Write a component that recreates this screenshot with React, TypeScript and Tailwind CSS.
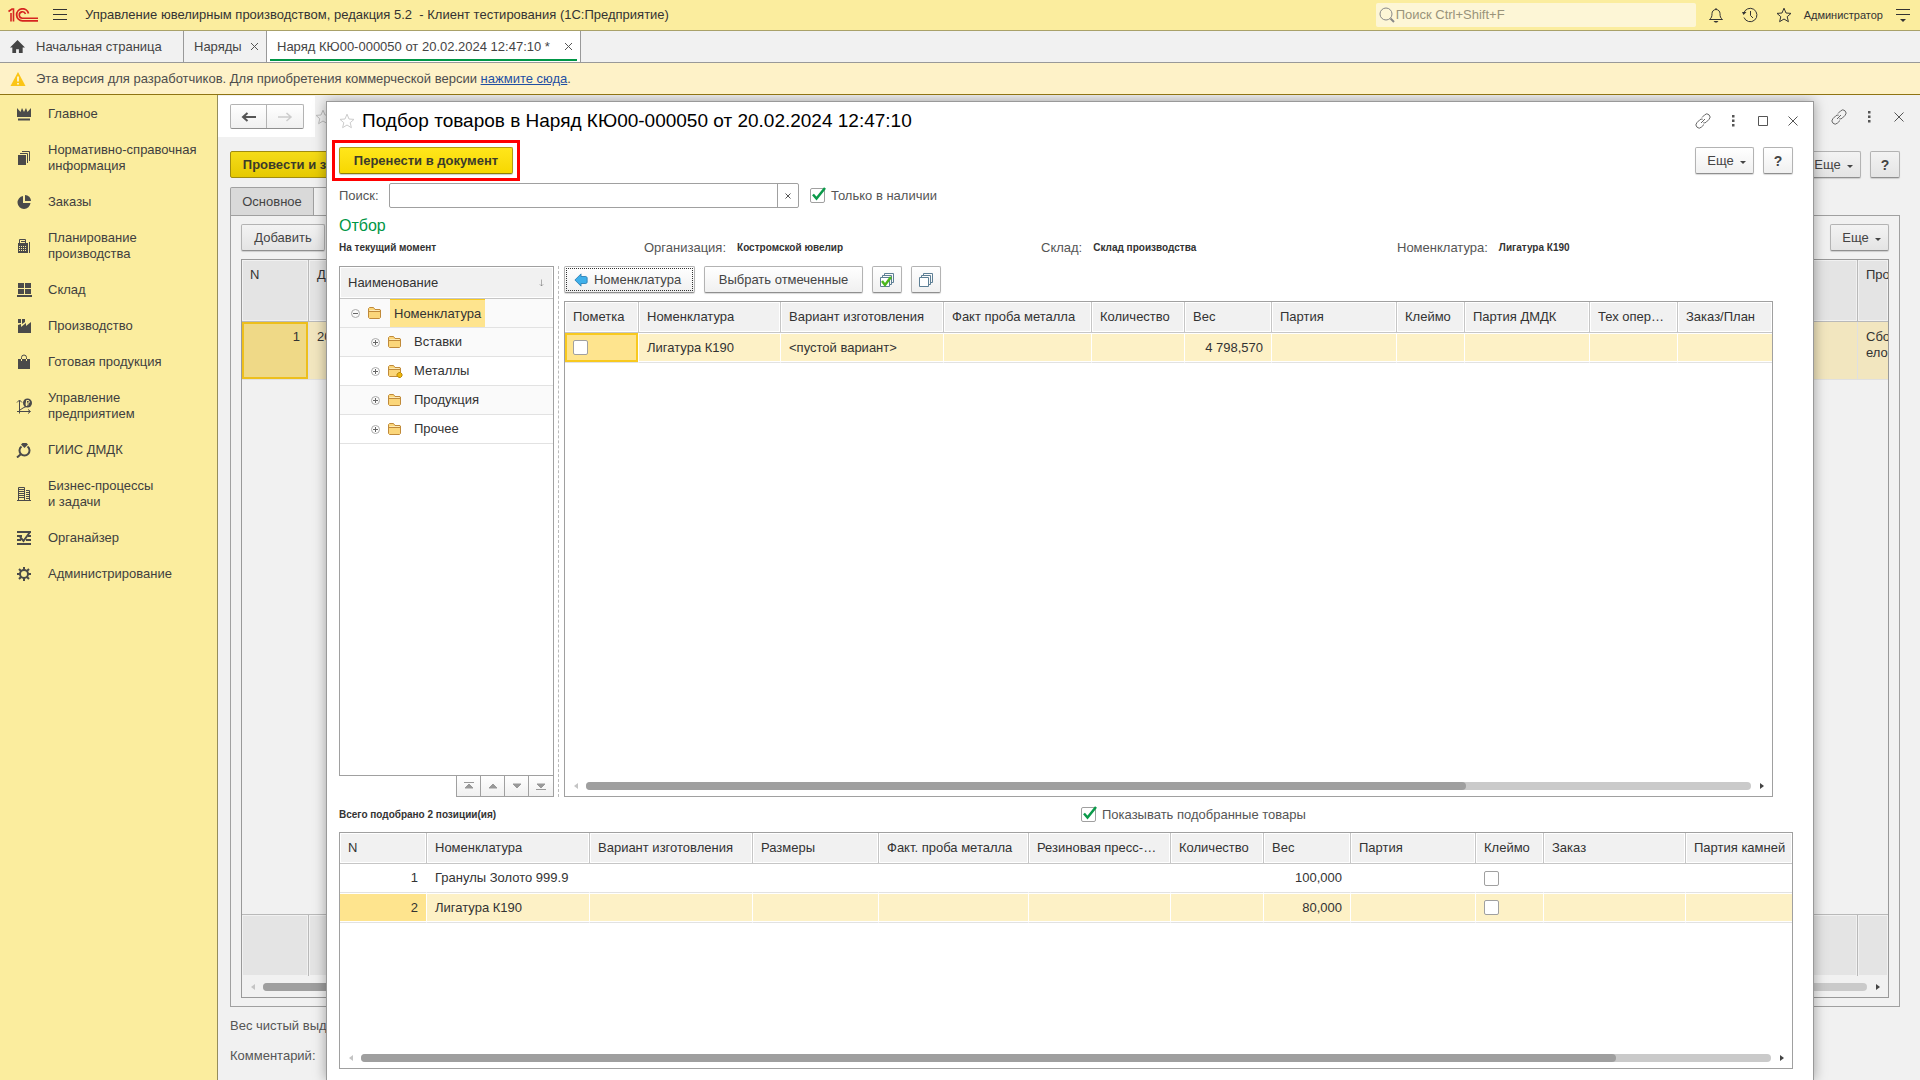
import React from 'react';
import clsx from 'clsx';

type IconProps = { children: React.ReactNode; className?: string; box?: number };

// All stroke icons share a 16x16 grid
const Icon: React.FC<IconProps> = ({ children, className = 'w-4 h-4', box = 16 }) => (
  <svg
    viewBox={`0 0 ${box} ${box}`}
    className={clsx('shrink-0', className)}
    fill="none"
    stroke="currentColor"
    strokeWidth="1"
    aria-hidden="true"
  >
    {children}
  </svg>
);

const LinkIcon = () => (
  <Icon className="w-4 h-4 text-[#666]">
    <path d="M7 4.5 9.6 1.9a3 3 0 0 1 4.5 4.4L11.300 9.100a3 3 0 0 1-3 .7" />
    <path d="M9 11.500 6.400 14.100a3 3 0 0 1-4.500-4.400L4.700 6.900a3 3 0 0 1 3-.7" />
    <path d="m6 10 4-4" />
  </Icon>
);

const DotsIcon = () => (
  <Icon className="w-4 h-4 text-[#555]">
    <g fill="currentColor" stroke="none">
      <path d="M7 2h2.500v2.500H7zM7 6.500h2.500V9H7zM7 11h2.500v2.500H7z" />
    </g>
  </Icon>
);

const CloseIcon = () => (
  <Icon className="w-4 h-4 text-[#555]">
    <path d="m3.500 3.500 9 9M12.500 3.500l-9 9" />
  </Icon>
);

const StarIcon = ({ className }: { className?: string }) => (
  <Icon className={className}>
    <path d="m8 1.200 2 4.800 5 .4-3.800 3.300 1.200 5L8 12l-4.400 2.700 1.200-5L1 6.400 6 6z" />
  </Icon>
);

const FolderIcon = ({ dot }: { dot?: boolean }) => (
  <Icon className="w-4 h-4">
    <path d="M1.500 12.500v-9l1-1h4l1.500 2h5l.5.500v7.500l-1 1h-10z" fill="#fbd67a" stroke="#c08a3a" />
    <path d="M1.500 6.500h12" stroke="#c08a3a" />
    <path d="M2.500 5.500h10" stroke="#fdeab5" />
    {dot && <path d="m10 11 2-1.500h1.500l1.500 1.500v2l-1.500 1.500H12L10 13z" fill="#f0b80c" stroke="#b98a10" />}
  </Icon>
);

type MenuItem = { label: string[]; icon: React.ReactNode };

const MENU: MenuItem[] = [
  {
    label: ['Главное'],
    icon: <path d="M1 2l3.500 4L6 2l2 4 2-4 1.500 4L15 2v9H1zM2 12.500h12v2H2z" fill="currentColor" stroke="none" />,
  },
  {
    label: ['Нормативно-справочная', 'информация'],
    icon: (
      <>
        <path d="M2 5h8v10H2z" fill="currentColor" stroke="none" />
        <path d="M4 3.500h7.500V13M6 1.500h7.500V11" />
      </>
    ),
  },
  {
    label: ['Заказы'],
    icon: (
      <>
        <path d="M7 2a6.500 6.500 0 1 0 7.500 7H7z" fill="currentColor" stroke="none" />
        <path d="M9 1a6 6 0 0 1 6 6H9z" fill="currentColor" stroke="none" />
      </>
    ),
  },
  {
    label: ['Планирование', 'производства'],
    icon: (
      <>
        <path d="M3.500 5.500v-4h6v4M13.500 4v11" />
        <path d="M2 5h10v10H2z" fill="currentColor" stroke="none" />
        <path d="M3 8.500h8M3 10.500h8M3 12.500h8" stroke="#fbed9e" strokeDasharray="1 1" />
        <path d="M5 3.500h4" />
      </>
    ),
  },
  {
    label: ['Склад'],
    icon: <path d="M2 1h6v5H2zM9 1h6v5H9zM2 7h6v5H2zM9 7h6v5H9zM1 13h15v2H1z" fill="currentColor" stroke="none" />,
  },
  {
    label: ['Производство'],
    icon: <path d="M2 1h3v4H2zM6 1h3v3L6 6zM2 7l3-1v3l5-4v3l5-4v11H2z" fill="currentColor" stroke="none" />,
  },
  {
    label: ['Готовая продукция'],
    icon: (
      <>
        <path d="M2 5h12v10H2z" fill="currentColor" stroke="none" />
        <path d="M5.500 5V3.500a2.500 2.500 0 0 1 5 0V5" />
        <path d="M5.500 5v2M10.500 5v2" stroke="#fbed9e" />
      </>
    ),
  },
  {
    label: ['Управление', 'предприятием'],
    icon: (
      <>
        <path d="M3.500 15.500v-13M1 4.500 3.500 2 6 4.500M1 13.500h13M12 11.500l2.500 2-2.500 2M4 12l3-2 2-1 3-1" />
        <circle cx="11.500" cy="5" r="4.500" fill="currentColor" stroke="none" />
        <path d="M10.500 8V2.500h1.500a1.200 1.200 0 0 1 0 2.700H9.500M9.500 6.800h3" stroke="#fbed9e" />
      </>
    ),
  },
  {
    label: ['ГИИС ДМДК'],
    icon: (
      <>
        <path d="M5 2.500 6.500 1h4L12 2.500 8.500 6z" fill="currentColor" stroke="none" />
        <path d="M5.500 4.500a5 5 0 1 0 6 0M4.500 12.500 1 15.500" strokeWidth="2" />
      </>
    ),
  },
  {
    label: ['Бизнес-процессы', 'и задачи'],
    icon: (
      <>
        <path d="M1 14.500h14M2.500 14V1.500h6V14M10 4.500h3.500V14" />
        <path d="M3 3.500h5M3 5.500h5M3 7.500h5M3 9.500h5M3 11.500h5M10 6.500h4M10 8.500h4M10 10.500h4M10 12.500h4" />
      </>
    ),
  },
  {
    label: ['Органайзер'],
    icon: (
      <>
        <path d="M1 2h14M1 6h5M12 6h3M1 10h4M10 10h5M1 14h14" strokeWidth="2" />
        <path d="m4 7 3.500 4L14 2" strokeWidth="2" />
      </>
    ),
  },
  {
    label: ['Администрирование'],
    icon: (
      <>
        <circle cx="8" cy="8" r="4" strokeWidth="2" />
        <path
          d="M8 1v3M8 12v3M1 8h3M12 8h3M3 3l2 2M11 11l2 2M13 3l-2 2M5 11l-2 2"
          strokeWidth="2"
        />
      </>
    ),
  },
];

const btn =
  'h-[27px] shrink-0 flex items-center justify-center rounded-[2px] border border-[#b3b3b3] border-b-[#8f8f8f] text-[#444] whitespace-nowrap shadow-[0_1px_1px_rgba(0,0,0,0.15)]';
const light = 'bg-gradient-to-b from-white to-[#f0f0f0]';
const dimmed = 'bg-gradient-to-b from-[#f3f3f3] to-[#e4e4e4]';

const MoreButton = ({ tone }: { tone: string }) => (
  <button type="button" className={clsx(btn, tone, 'w-[59px] gap-1.5 pl-1')}>
    Еще
    <span className="mt-1 border-x-[3px] border-x-transparent border-t-[3px] border-t-[#444]" />
  </button>
);

const HelpButton = ({ tone }: { tone: string }) => (
  <button type="button" className={clsx(btn, tone, 'w-[30px] font-bold text-[14px] text-[#222]')}>
    ?
  </button>
);

const CheckBox = ({ id, label, checked }: { id: string; label?: string; checked?: boolean }) => (
  <span className="relative block w-[15px] h-[15px] shrink-0">
    <input
      id={id}
      type="checkbox"
      defaultChecked={checked}
      aria-label={label}
      className="peer block appearance-none w-[15px] h-[15px] bg-white border border-[#a0a0a0] rounded-[2px]"
    />
    <svg
      viewBox="0 0 16 16"
      className="hidden peer-checked:block absolute left-0 -top-px w-4 h-4 pointer-events-none"
      fill="none"
      stroke="#0b9a4a"
      strokeWidth="2.500"
    >
      <path d="M3 7.500 6.500 11.500 15 1" />
    </svg>
  </span>
);

type ScrollProps = { thumb: string; className?: string };

const ScrollBar: React.FC<ScrollProps> = ({ thumb, className }) => (
  <div className={clsx('flex items-center h-[13px] pl-[9px] pr-2 shrink-0', className)}>
    <span className="border-y-[3px] border-y-transparent border-r-[4px] border-r-[#c4c4c4]" />
    <div className="flex-1 ml-[8px] mr-[9px] h-2 rounded-full bg-[#cacaca]">
      <div className="h-2 rounded-full bg-[#9f9f9f]" style={{ width: thumb }} />
    </div>
    <span className="border-y-[3px] border-y-transparent border-l-[4px] border-l-[#444]" />
  </div>
);

type Column = { title: string; width?: number };
type Cell = { text?: string; right?: boolean; check?: string; current?: boolean };
type Row = { selected?: boolean; cells: Cell[] };

const STOCK_COLUMNS: Column[] = [
  { title: 'Пометка', width: 74 },
  { title: 'Номенклатура', width: 142 },
  { title: 'Вариант изготовления', width: 163 },
  { title: 'Факт проба металла', width: 148 },
  { title: 'Количество', width: 93 },
  { title: 'Вес', width: 87 },
  { title: 'Партия', width: 125 },
  { title: 'Клеймо', width: 68 },
  { title: 'Партия ДМДК', width: 125 },
  { title: 'Тех операция', width: 88 },
  { title: 'Заказ/План' },
];

const STOCK_ROWS: Row[] = [
  {
    selected: true,
    cells: [
      { check: 'Пометка', current: true },
      { text: 'Лигатура К190' },
      { text: '<пустой вариант>' },
      {},
      {},
      { text: '4 798,570', right: true },
      {},
      {},
      {},
      {},
      {},
    ],
  },
];

const PICKED_COLUMNS: Column[] = [
  { title: 'N', width: 87 },
  { title: 'Номенклатура', width: 163 },
  { title: 'Вариант изготовления', width: 163 },
  { title: 'Размеры', width: 126 },
  { title: 'Факт. проба металла', width: 150 },
  { title: 'Резиновая пресс-форма', width: 142 },
  { title: 'Количество', width: 93 },
  { title: 'Вес', width: 87 },
  { title: 'Партия', width: 125 },
  { title: 'Клеймо', width: 68 },
  { title: 'Заказ', width: 142 },
  { title: 'Партия камней' },
];

const pickedRow = (n: string, name: string, weight: string, selected: boolean): Row => ({
  selected,
  cells: [
    { text: n, right: true, current: selected },
    { text: name },
    {},
    {},
    {},
    {},
    {},
    { text: weight, right: true },
    {},
    { check: `Клеймо, строка ${n}` },
    {},
    {},
  ],
});

const PICKED_ROWS: Row[] = [
  pickedRow('1', 'Гранулы Золото 999.9', '100,000', false),
  pickedRow('2', 'Лигатура К190', '80,000', true),
];

const cellShadow = (row: Row, cell: Cell) => {
  if (!row.selected) return '';
  return cell.current && cell.check
    ? 'shadow-[inset_0_0_0_2px_#f8c91f]'
    : 'shadow-[inset_0_1px_0_#fff,inset_0_-1px_0_#fff]';
};

const DataTable = ({ id, columns, rows }: { id: string; columns: Column[]; rows: Row[] }) => (
  <table className="w-full table-fixed border-separate border-spacing-0 text-[#333]">
    <colgroup>
      {columns.map((c) => (
        <col key={c.title} style={c.width ? { width: c.width } : undefined} />
      ))}
    </colgroup>
    <thead>
      <tr>
        {columns.map((c) => (
          <th
            key={c.title}
            className="h-[31px] pl-2 pr-3 last:pr-1 text-left font-normal truncate bg-[#f1f1f1] border-r border-b border-[#c6c6c6] last:border-r-0 shadow-[inset_0_0_0_1px_#fff]"
          >
            {c.title}
          </th>
        ))}
      </tr>
    </thead>
    <tbody>
      {rows.map((row, r) => (
        <tr key={r}>
          {row.cells.map((cell, i) => (
            <td
              key={i}
              className={clsx(
                'px-2 truncate border-b border-b-[#e2e2e2] border-r border-r-white last:border-r-0',
                row.selected ? 'h-[30px]' : 'h-[29px]',
                cell.right && 'text-right',
                row.selected && (cell.current ? 'bg-[#fee48e]' : 'bg-[#fdf1c6]'),
                cellShadow(row, cell)
              )}
            >
              {cell.check ? <CheckBox id={`${id}-${r}-${i}`} label={cell.check} /> : cell.text}
            </td>
          ))}
        </tr>
      ))}
    </tbody>
  </table>
);

const TREE = [
  { name: 'Вставки' },
  { name: 'Металлы', dot: true },
  { name: 'Продукция' },
  { name: 'Прочее' },
];

const Expander = ({ open }: { open?: boolean }) => (
  <Icon className="w-[9px] h-[9px] text-[#aaa]" box={9}>
    <circle cx="4.500" cy="4.500" r="4" />
    <path d={open ? 'M2 4.500h5' : 'M2 4.500h5M4.500 2v5'} stroke="#666" />
  </Icon>
);

const NavTree = () => (
  <div className="w-[215px] shrink-0 flex flex-col">
    <div className="flex-1 border border-[#a0a0a0] bg-white text-[#333]">
      <div className="h-8 flex items-center justify-between px-2 bg-[#f1f1f1] border-b border-[#c6c6c6] shadow-[inset_0_0_0_1px_#fff]">
        <span>Наименование</span>
        <Icon className="w-[7px] h-[14px] text-[#666]" box={14}>
          <path d="M7 0v13M3.500 9.500 7 13l3.500-3.500" />
        </Icon>
      </div>
      <ul>
        <li className="h-[29px] flex items-center pl-[11px] bg-[#fafafa] border-b border-[#e2e2e2]">
          <Expander open />
          <span className="ml-[7px] mr-[7px]">
            <FolderIcon />
          </span>
          <span className="h-full flex items-center px-1 bg-[#fee48e] border-t border-[#f8c91f]">Номенклатура</span>
        </li>
        {TREE.map((node) => (
          <li
            key={node.name}
            className="h-[29px] flex items-center pl-[31px] gap-[7px] border-b border-[#e2e2e2] odd:bg-white even:bg-[#fafafa] last:bg-[#fafafa]"
          >
            <Expander />
            <FolderIcon dot={node.dot} />
            <span className="pl-1">{node.name}</span>
          </li>
        ))}
      </ul>
    </div>
    <div className="self-end flex border-x border-b border-[#a0a0a0] divide-x divide-[#a0a0a0] text-[#999]">
      {[
        { label: 'В начало', d: 'M3 4.500h10M4 10l4-4 4 4z' },
        { label: 'Вверх', d: 'M4 10l4-4 4 4z' },
        { label: 'Вниз', d: 'M4 6l4 4 4-4z' },
        { label: 'В конец', d: 'M3 11.500h10M4 6l4 4 4-4z' },
      ].map((b) => (
        <button
          key={b.label}
          type="button"
          aria-label={b.label}
          className="w-6 h-5 flex items-center justify-center bg-gradient-to-b from-white to-[#f0f0f0]"
        >
          <Icon>
            <path d={b.d} fill="currentColor" />
          </Icon>
        </button>
      ))}
    </div>
  </div>
);

const FILTERS = [
  { name: 'Организация:', value: 'Костромской ювелир' },
  { name: 'Склад:', value: 'Склад производства' },
  { name: 'Номенклатура:', value: 'Лигатура К190' },
];

const PickDialog = () => (
  <section
    role="dialog"
    aria-label="Подбор товаров"
    className="absolute top-[6px] bottom-0 left-[108px] right-[106px] flex flex-col pl-3 pr-5 pb-[11px] bg-white border border-b-0 border-[#999] shadow-[0_0_12px_rgba(0,0,0,0.35)]"
  >
    <header className="h-[38px] shrink-0 flex items-center">
      <StarIcon className="w-4 h-4 text-[#ccc]" />
      <h1 className="flex-1 ml-[7px] text-[19px] text-black">Подбор товаров в Наряд КЮ00-000050 от 20.02.2024 12:47:10</h1>
      <div className="flex items-center gap-[14px] -mr-2">
        <button type="button" aria-label="Ссылка"><LinkIcon /></button>
        <button type="button" aria-label="Меню"><DotsIcon /></button>
        <button type="button" aria-label="Развернуть">
          <Icon className="w-4 h-4 text-[#555]">
            <path d="M3.500 3.500h9v9h-9z" />
          </Icon>
        </button>
        <button type="button" aria-label="Закрыть"><CloseIcon /></button>
      </div>
    </header>

    <div className="shrink-0 flex items-center justify-between">
      <div className="-ml-[7px] p-1 border-[3px] border-[#f00]">
        <button
          type="button"
          className="w-[174px] h-[27px] rounded-[2px] border border-[#b09c10] border-b-[#8f7e08] bg-gradient-to-b from-[#ffe61a] to-[#f7d800] font-bold text-[#3b3b2a] shadow-[0_1px_1px_rgba(0,0,0,0.2)]"
        >
          Перенести в документ
        </button>
      </div>
      <div className="flex gap-[9px]">
        <MoreButton tone={light} />
        <HelpButton tone={light} />
      </div>
    </div>

    <div className="mt-[2px] shrink-0 flex items-center text-[#555]">
      <label htmlFor="pick-search" className="w-[50px]">Поиск:</label>
      <div className="w-[410px] h-[25px] flex border border-[#a0a0a0] rounded-[2px]">
        <input id="pick-search" type="text" className="flex-1 min-w-0 px-2 outline-none" />
        <button type="button" aria-label="Очистить" className="w-[21px] flex items-center justify-center border-l border-[#a0a0a0]">
          <Icon className="w-[6px] h-[6px]" box={6}>
            <path d="m.5.500 5 5M5.500.500l-5 5" />
          </Icon>
        </button>
      </div>
      <div className="ml-[11px] flex items-center gap-[6px]">
        <CheckBox id="in-stock" checked />
        <label htmlFor="in-stock">Только в наличии</label>
      </div>
    </div>

    <h2 className="mt-2 shrink-0 text-[16px] leading-5 text-[#009646]">Отбор</h2>
    <div className="mt-[2px] shrink-0 h-5 grid grid-cols-[305px_397px_356px_1fr] items-center text-[#555]">
      <b className="text-[10px] text-[#333]">На текущий момент</b>
      {FILTERS.map((f) => (
        <span key={f.name} className="flex items-center gap-[11px]">
          {f.name}
          <b className="text-[10px] text-[#333]">{f.value}</b>
        </span>
      ))}
    </div>

    <div className="mt-2 flex-1 flex">
      <NavTree />
      <div className="ml-1 mr-[5px] border-l border-dashed border-[#bbb]" />
      <div className="flex-1 min-w-0 mr-5 flex flex-col">
        <div className="flex items-center">
          <button type="button" className={clsx(btn, light, 'w-[131px] p-px')}>
            <span className="w-full h-full flex items-center justify-center gap-[6px] pr-1 border border-dotted border-[#333]">
              <Icon className="w-[14px] h-[14px]">
                <path d="M1 8 8 1v3h5.500l1.500 1v6l-1.500 1H8v3z" fill="#3fb0ea" stroke="#2a7fb5" />
              </Icon>
              Номенклатура
            </span>
          </button>
          <button type="button" className={clsx(btn, light, 'ml-[9px] w-[159px]')}>Выбрать отмеченные</button>
          <button type="button" aria-label="Отметить все" className={clsx(btn, light, 'ml-[9px] w-[30px]')}>
            <Icon>
              <path d="M5.500 3V1.500h9v9H13M3.500 5V3.500h9v9H11" stroke="#5d7f95" />
              <path d="M1.500 5.500h9v9h-9z" fill="#fff" stroke="#5d7f95" />
              <path d="m3 9 3 4 6-8" stroke="#4cb81e" strokeWidth="2.500" />
            </Icon>
          </button>
          <button type="button" aria-label="Снять отметки" className={clsx(btn, light, 'ml-[9px] w-[30px]')}>
            <Icon>
              <path d="M5.500 3V1.500h9v9H13M3.500 5V3.500h9v9H11" stroke="#5d7f95" />
              <path d="M1.500 5.500h9v9h-9z" fill="#fff" stroke="#5d7f95" />
            </Icon>
          </button>
        </div>
        <div className="mt-2 flex-1 flex flex-col justify-between border border-[#a0a0a0]">
          <DataTable id="stock" columns={STOCK_COLUMNS} rows={STOCK_ROWS} />
          <ScrollBar thumb="75.500%" className="mb-1" />
        </div>
      </div>
    </div>

    <div className="h-[35px] shrink-0 grid grid-cols-[742px_1fr] items-center text-[#555]">
      <b className="text-[10px] text-[#333]">Всего подобрано 2 позиции(ия)</b>
      <div className="flex items-center gap-[6px]">
        <CheckBox id="show-picked" checked />
        <label htmlFor="show-picked">Показывать подобранные товары</label>
      </div>
    </div>
    <div className="h-[237px] shrink-0 flex flex-col justify-between border border-[#a0a0a0]">
      <DataTable id="picked" columns={PICKED_COLUMNS} rows={PICKED_ROWS} />
      <ScrollBar thumb="89%" className="mb-1" />
    </div>
  </section>
);

const docHead = 'pl-2 pt-[7px] align-top text-left font-normal bg-[#e4e4e4] border-r border-b border-[#b9b9b9] last:border-r-0 shadow-[inset_0_0_0_1px_#f1f1f1]';
const docCell = 'px-2 pt-[7px] align-top border-b border-r border-[#e0e0e0] last:border-r-0 bg-[#f2e6bf]';
const docFoot = 'h-[62px] bg-[#e4e4e4] border-t border-r border-[#b9b9b9] last:border-r-0 shadow-[inset_0_0_0_1px_#f1f1f1]';

const DocumentWindow = () => (
  <div className="flex-1 flex flex-col">
    <div className="h-[42px] shrink-0 flex items-center pt-px pr-[13px]">
      <div className="w-[97px] h-[41px] bg-white pl-3 flex items-center">
        <div className="flex rounded-[2px] border border-[#b3b3b3] border-b-[#8f8f8f] divide-x divide-[#b3b3b3] bg-gradient-to-b from-white to-[#f0f0f0]">
          <button type="button" aria-label="Назад" className="w-[36px] h-[23px] flex items-center justify-center text-[#555]">
            <Icon>
              <path d="M2 8h13M6.500 4 2 8l4.500 4" strokeWidth="2" />
            </Icon>
          </button>
          <button type="button" aria-label="Вперед" className="w-[36px] h-[23px] flex items-center justify-center text-[#ccc]">
            <Icon>
              <path d="M1 8h13M9.500 4 14 8l-4.500 4" strokeWidth="1.500" />
            </Icon>
          </button>
        </div>
      </div>
      <StarIcon className="w-4 h-4 text-[#bbb]" />
      <div className="ml-auto flex items-center gap-[14px] text-[#555]">
        <button type="button" aria-label="Ссылка на документ"><LinkIcon /></button>
        <button type="button" aria-label="Меню документа"><DotsIcon /></button>
        <button type="button" aria-label="Закрыть документ"><CloseIcon /></button>
      </div>
    </div>

    <div className="flex-1 flex flex-col pl-3 pr-5">
      <div className="mt-[14px] flex justify-between">
        <button
          type="button"
          className="w-[156px] h-[27px] rounded-[2px] border border-[#a08c10] bg-gradient-to-b from-[#f5dc18] to-[#e6c900] font-bold text-[#3b3b2a] whitespace-nowrap"
        >
          Провести и закрыть
        </button>
        <div className="flex gap-[9px]">
          <MoreButton tone={dimmed} />
          <HelpButton tone={dimmed} />
        </div>
      </div>
      <div className="mt-[9px] flex h-7">
        <button type="button" className="w-[84px] bg-[#d9d9d9] border border-b-0 border-[#a0a0a0] rounded-tl-[2px] text-[#444]">Основное</button>
        <div className="w-24 border-t border-r border-[#a0a0a0]" />
      </div>
      <div className="flex-1 flex flex-col border border-[#a0a0a0] px-[10px] pt-2 pb-2">
        <div className="flex justify-between">
          <button type="button" className={clsx(btn, dimmed, 'w-[84px]')}>Добавить</button>
          <MoreButton tone={dimmed} />
        </div>
        <div className="mt-2 flex-1 flex flex-col border border-[#999] text-[#333]">
          <table className="flex-1 w-full h-full table-fixed border-separate border-spacing-0 leading-4">
            <colgroup>
              <col className="w-[67px]" />
              <col />
              <col className="w-[30px]" />
            </colgroup>
            <thead>
              <tr className="h-[62px]">
                <th className={docHead}>N</th>
                <th className={docHead}>Дата</th>
                <th className={clsx(docHead, 'overflow-hidden')}>Про</th>
              </tr>
            </thead>
            <tbody>
              <tr className="h-[58px]">
                <td className="px-2 pt-[7px] align-top text-right border-b border-r border-[#e0e0e0] bg-[#efd987] shadow-[inset_0_0_0_2px_#edbf1c]">1</td>
                <td className={docCell}>20.02.2024</td>
                <td className={clsx(docCell, 'overflow-hidden pr-0')}>
                  Сбо
                  <br />
                  ело
                </td>
              </tr>
              <tr><td colSpan={3} /></tr>
            </tbody>
            <tfoot>
              <tr>
                <td className={docFoot} />
                <td className={docFoot} />
                <td className={docFoot} />
              </tr>
            </tfoot>
          </table>
          <ScrollBar thumb="80%" className="mt-1 mb-1" />
        </div>
      </div>
      <div className="pt-[9px] pb-[14px] flex flex-col gap-[10px] leading-5 text-[#555]">
        <span>Вес чистый выдано:</span>
        <span>Комментарий:</span>
      </div>
    </div>
  </div>
);

const TitleBar = () => (
  <header className="h-[31px] shrink-0 flex items-center bg-[#fbed9e] border-b border-[#a9a169] text-[#333]">
    <svg viewBox="0 0 30 14" className="ml-2 w-[30px] h-[14px]" fill="none" stroke="#d6241f" aria-label="1С">
      <path d="M.5 3.500 4 1h1.500v12.500M3 5v8.500" strokeWidth="1.600" />
      <path d="M20.500 5.500a6 6 0 1 0-6 7.300H30" strokeWidth="1.800" />
      <path d="M17.500 6a3.200 3.200 0 1 0-3 4.200H30" strokeWidth="1.600" />
    </svg>
    <button type="button" aria-label="Главное меню" className="ml-[14px]">
      <Icon>
        <path d="M1 2.500h14M1 7.500h14M1 12.500h14" />
      </Icon>
    </button>
    <span className="ml-[17px] whitespace-pre">Управление ювелирным производством, редакция 5.2  - Клиент тестирования (1С:Предприятие)</span>
    <div className="ml-auto w-[320px] h-6 mb-px flex items-center pl-[3px] rounded-[2px] bg-[#fdf6d6] text-[#888]">
      <Icon>
        <circle cx="7" cy="7" r="6" />
        <path d="m11.500 11.500 3.500 3.500" strokeWidth="2" />
      </Icon>
      <input
        type="search"
        aria-label="Поиск"
        placeholder="Поиск Ctrl+Shift+F"
        className="flex-1 pl-px bg-transparent outline-none placeholder:text-[#99937a]"
      />
    </div>
    <div className="flex items-center gap-[18px] ml-3">
      <button type="button" aria-label="Уведомления">
        <Icon>
          <path d="M1.500 12.500h13c-2-1.500-2.500-3-2.500-6 0-2-1.500-4-4-4s-4 2-4 4c0 3-.5 4.500-2.500 6zM8 2.500V1" />
          <path d="M5.500 14h5L9 15.500H7z" fill="currentColor" stroke="none" />
        </Icon>
      </button>
      <button type="button" aria-label="История">
        <Icon>
          <path d="M1.700 6.500a6.700 6.700 0 1 1 .3 4M8.500 4v4.500L11 11" />
          <path d="M0 5h4.500L1.500 8z" fill="currentColor" stroke="none" />
        </Icon>
      </button>
      <button type="button" aria-label="Избранное">
        <StarIcon />
      </button>
    </div>
    <span className="ml-3 text-[11px]">Администратор</span>
    <button type="button" aria-label="Настройки" className="ml-3 mr-[9px]">
      <Icon>
        <path d="M1 2.500h14M1 7.500h14" />
        <path d="M5 12h6l-3 3z" fill="currentColor" stroke="none" />
      </Icon>
    </button>
  </header>
);

const TabClose = ({ label }: { label: string }) => (
  <button type="button" aria-label={label}>
    <Icon className="w-[9px] h-[9px] text-[#555]" box={9}>
      <path d="m1 1 7 7M8 1 1 8" />
    </Icon>
  </button>
);

const TabBar = () => (
  <nav className="h-8 shrink-0 flex bg-[#f1f1f1] border-b border-[#999] text-[#444]">
    <div className="w-[184px] flex items-center pl-[10px] gap-[11px] border-r border-[#999]">
      <Icon className="w-[15px] h-[15px]">
        <path d="M8 1 0 9h2.500v6h4v-4h3v4h4V9H16z" fill="currentColor" stroke="none" />
      </Icon>
      Начальная страница
    </div>
    <div className="w-[83px] flex items-center justify-between pl-[10px] pr-[7px] border-r border-[#999]">
      Наряды
      <TabClose label="Закрыть Наряды" />
    </div>
    <div className="w-[314px] px-[3px] pb-px flex bg-white border-r border-[#999]">
      <div className="flex-1 flex items-center justify-between pl-[7px] pr-1 pt-[3px] border-b-2 border-[#009646]">
        Наряд КЮ00-000050 от 20.02.2024 12:47:10 *
        <TabClose label="Закрыть Наряд" />
      </div>
    </div>
  </nav>
);

const App: React.FC = () => (
  <div className="min-h-screen flex flex-col bg-[#f1f1f1] text-[13px] leading-4 font-['Liberation_Sans',Arial,sans-serif]">
    <TitleBar />
    <TabBar />
    <div className="h-8 shrink-0 flex items-center pl-[10px] gap-[10px] bg-[#fef2c8] border-b border-[#8f7413] text-[#4d4d4d]">
      <Icon>
        <path d="M8 1 15.500 15H.5z" fill="#fbc516" stroke="none" />
        <path d="M8 5.500v5M8 12v1.500" stroke="#fff" strokeWidth="1.500" />
      </Icon>
      <p>
        Эта версия для разработчиков. Для приобретения коммерческой версии{' '}
        <a href="#buy" className="text-[#1f4fa3] underline">нажмите сюда</a>.
      </p>
    </div>
    <div className="flex-1 flex">
      <aside className="w-[218px] shrink-0 pt-px bg-[#fbed9e] border-r border-[#958d5a] text-[#3f3f3f]">
        {MENU.map((item) => (
          <a key={item.label[0]} href="#section" className="flex items-center gap-4 pl-4 py-[10px]">
            <Icon className="w-4 h-4 text-[#4a4a4a]">{item.icon}</Icon>
            <span>
              {item.label.map((line) => (
                <span key={line} className="block">{line}</span>
              ))}
            </span>
          </a>
        ))}
      </aside>
      <main className="relative flex-1 min-w-0 flex overflow-hidden">
        <DocumentWindow />
        <PickDialog />
      </main>
    </div>
  </div>
);

export default App;
